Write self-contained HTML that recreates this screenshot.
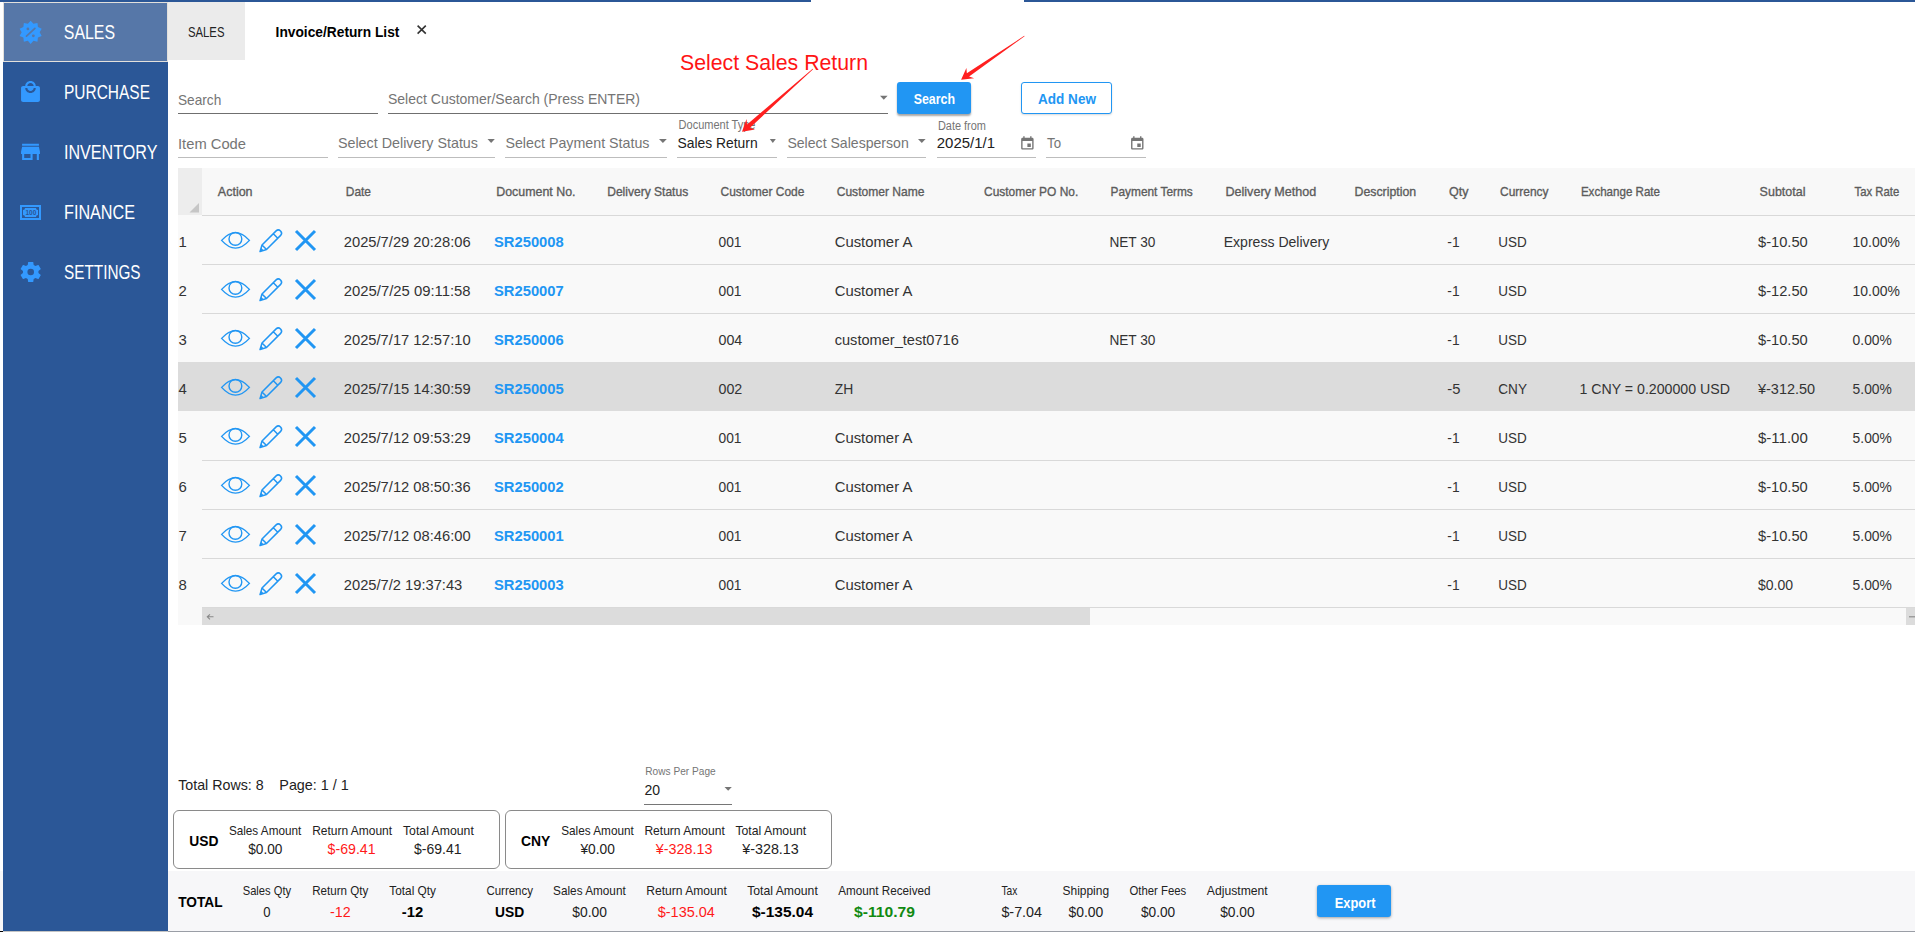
<!DOCTYPE html>
<html lang="en"><head><meta charset="utf-8"><title>Invoice/Return List</title>
<style>
html,body{margin:0;padding:0;width:1915px;height:932px;overflow:hidden;background:#fff;font-family:"Liberation Sans",sans-serif;}
.a{position:absolute;box-sizing:border-box;}
svg text{font-family:"Liberation Sans",sans-serif;}
</style></head><body>
<!-- top accent bar -->
<div class="a" style="left:0;top:0;width:811px;height:2px;background:#2b5797"></div>
<div class="a" style="left:1024px;top:0;width:891px;height:2px;background:#2b5797"></div>
<!-- sidebar -->
<div class="a" style="left:3px;top:2px;width:165px;height:930px;background:#2b5797"></div>
<div class="a" style="left:3px;top:2px;width:165px;height:60px;background:#5677a8;border:1px solid #e2e0dc"></div>
<!-- tabs -->
<div class="a" style="left:168px;top:2px;width:77px;height:58px;background:#ebebeb"></div>
<!-- filters: underlines -->
<div class="a" style="left:178px;top:113px;width:200px;height:1px;background:#6f6f6f"></div>
<div class="a" style="left:388px;top:113px;width:500px;height:1px;background:#6f6f6f"></div>
<div class="a" style="left:178px;top:157px;width:150px;height:1px;background:#bdbdbd"></div>
<div class="a" style="left:338px;top:157px;width:157px;height:1px;background:#bdbdbd"></div>
<div class="a" style="left:505px;top:157px;width:162px;height:1px;background:#bdbdbd"></div>
<div class="a" style="left:677px;top:157px;width:100px;height:1px;background:#bdbdbd"></div>
<div class="a" style="left:787px;top:157px;width:139px;height:1px;background:#bdbdbd"></div>
<div class="a" style="left:937px;top:157px;width:99px;height:1px;background:#bdbdbd"></div>
<div class="a" style="left:1046px;top:157px;width:100px;height:1px;background:#bdbdbd"></div>
<!-- buttons -->
<div class="a" style="left:897px;top:82px;width:74px;height:32px;background:#2196f3;border-radius:3px;box-shadow:0 2px 2px rgba(0,0,0,.35)"></div>
<div class="a" style="left:1021px;top:82px;width:91px;height:32px;background:#fff;border:1.3px solid #2196f3;border-radius:3px;box-shadow:0 1px 2px rgba(0,0,0,.15)"></div>
<!-- table -->
<div class="a" style="left:178px;top:168px;width:1737px;height:47px;background:#f8f8f8"></div>
<div class="a" style="left:178px;top:168px;width:24px;height:47px;background:#ededed"></div>
<div class="a" style="left:178px;top:215px;width:1737px;height:392px;background:#f9f9f9"></div>
<div class="a" style="left:202px;top:215px;width:1713px;height:1px;background:#d9d9d9"></div>
<div class="a" style="left:178px;top:362px;width:1737px;height:49px;background:#dcdcdc"></div>
<div class="a" style="left:202px;top:264px;width:1713px;height:1px;background:#d9d9d9"></div>
<div class="a" style="left:202px;top:313px;width:1713px;height:1px;background:#d9d9d9"></div>
<div class="a" style="left:202px;top:460px;width:1713px;height:1px;background:#d9d9d9"></div>
<div class="a" style="left:202px;top:509px;width:1713px;height:1px;background:#d9d9d9"></div>
<div class="a" style="left:202px;top:558px;width:1713px;height:1px;background:#d9d9d9"></div>
<!-- scrollbar -->
<div class="a" style="left:178px;top:607px;width:1737px;height:18px;background:#f9f9f9"></div>
<div class="a" style="left:202px;top:607px;width:1713px;height:1px;background:#d9d9d9"></div>
<div class="a" style="left:202px;top:608px;width:888px;height:17px;background:#dcdcdc"></div>
<div class="a" style="left:1906px;top:608px;width:9px;height:17px;background:#dcdcdc"></div>
<!-- footer -->
<div class="a" style="left:644px;top:804px;width:88px;height:1px;background:#767676"></div>
<div class="a" style="left:173px;top:810px;width:327px;height:59px;border:1px solid #8a8a8a;border-radius:6px"></div>
<div class="a" style="left:505px;top:810px;width:327px;height:59px;border:1px solid #8a8a8a;border-radius:6px"></div>
<div class="a" style="left:168px;top:871px;width:1747px;height:61px;background:#f7f7f9;border-bottom:1px solid #9a9ea6"></div>
<div class="a" style="left:0;top:931px;width:3px;height:1px;background:#000"></div>
<div class="a" style="left:3px;top:931px;width:165px;height:1px;background:#c4c4c4"></div>
<div class="a" style="left:0;top:871px;width:3px;height:60px;background:#f7f7f9"></div>
<div class="a" style="left:1317px;top:885px;width:73.5px;height:31.5px;background:#2196f3;border-radius:3px;box-shadow:0 1px 3px rgba(0,0,0,.35)"></div>

<svg class="a" style="left:0;top:0" width="1915" height="932" viewBox="0 0 1915 932">
<polygon points="30.65,20.70 33.43,23.74 37.47,22.92 37.93,27.01 41.68,28.72 39.65,32.30 41.68,35.88 37.93,37.59 37.47,41.68 33.43,40.86 30.65,43.90 27.87,40.86 23.83,41.68 23.37,37.59 19.62,35.88 21.65,32.30 19.62,28.72 23.37,27.01 23.83,22.92 27.87,23.74" fill="#3399ff"/>
<circle cx="27.9" cy="28.9" r="1.4" fill="#5677a8"/><circle cx="33.35" cy="35.8" r="1.4" fill="#5677a8"/>
<line x1="26.5" y1="36.1" x2="34.9" y2="28.3" stroke="#5677a8" stroke-width="1.7" stroke-linecap="round"/>
<g transform="translate(17.9,80) scale(1.05,1.0)"><path fill="#3399ff" d="M19 6h-2c0-2.76-2.24-5-5-5S7 3.24 7 6H5c-1.1 0-1.99.9-1.99 2L3 20c0 1.1.9 2 2 2h14c1.1 0 2-.9 2-2V8c0-1.1-.9-2-2-2zm-7-3c1.66 0 3 1.34 3 3H9c0-1.66 1.34-3 3-3zm0 10c-2.76 0-5-2.24-5-5h2c0 1.66 1.34 3 3 3s3-1.34 3-3h2c0 2.76-2.24 5-5 5z"/></g>
<g transform="translate(17.9,139.6) scale(1.05,1.02)"><path fill="#3399ff" d="M20 4H4v2h16V4zm1 10v-2l-1-5H4l-1 5v2h1v6h10v-6h4v6h2v-6h1zm-9 4H6v-4h6v4z"/></g>
<rect x="21" y="206" width="19" height="13" fill="none" stroke="#3399ff" stroke-width="2"/>
<path fill="#3399ff" d="M25,208 H36 A2,2 0 0 0 38,210 V215 A2,2 0 0 0 36,217 H25 A2,2 0 0 0 23,215 V210 A2,2 0 0 0 25,208 Z"/>
<text x="25.5" y="215.2" font-size="7.3" font-weight="bold" fill="#2b5797" textLength="10.8" lengthAdjust="spacingAndGlyphs">100</text>
<g transform="translate(17.74,259.4) scale(1.08,1.05)"><path fill="#3399ff" fill-rule="evenodd" d="M19.14 12.94c.04-.3.06-.61.06-.94 0-.32-.02-.64-.07-.94l2.03-1.58c.18-.14.23-.41.12-.61l-1.92-3.32c-.12-.22-.37-.29-.59-.22l-2.39.96c-.5-.38-1.030-.7-1.62-.94l-.36-2.54c-.04-.24-.24-.41-.48-.41h-3.84c-.24 0-.43.17-.47.41l-.36 2.54c-.59.24-1.13.57-1.62.94l-2.39-.96c-.22-.08-.47 0-.59.22L2.74 8.87c-.12.21-.08.47.12.61l2.03 1.58c-.05.3-.09.63-.09.94s.02.64.07.94l-2.03 1.58c-.18.14-.23.41-.12.61l1.92 3.32c.12.22.37.29.59.22l2.39-.96c.5.38 1.03.7 1.62.94l.36 2.54c.05.24.24.41.48.41h3.84c.24 0 .44-.17.47-.41l.36-2.54c.59-.24 1.13-.56 1.62-.94l2.39.96c.22.08.47 0 .59-.22l1.92-3.32c.12-.22.07-.47-.12-.61l-2.01-1.58z"/></g><circle cx="30.7" cy="272" r="3.3" fill="#2b5797"/>
<path d="M417.6,25.6 L425.8,33.6 M425.8,25.6 L417.6,33.6" stroke="#333" stroke-width="1.6"/>
<polygon points="880,95.7 887.6,95.7 883.80,99.7" fill="#757575"/>
<polygon points="487.5,139 494.8,139 491.15,143" fill="#757575"/>
<polygon points="659,139 666.8,139 662.90,143" fill="#757575"/>
<polygon points="769.8,139 775.8,139 772.80,143" fill="#757575"/>
<polygon points="918,139 925.6,139 921.80,143" fill="#757575"/>
<polygon points="724.5,787 731.8,787 728.15,790.7" fill="#757575"/>
<g transform="translate(1019.1,135.7) scale(0.69,0.66)"><path fill="#757575" d="M17 12h-5v5h5v-5zM16 1v2H8V1H6v2H5c-1.11 0-1.99.9-1.99 2L3 19c0 1.1.89 2 2 2h14c1.1 0 2-.9 2-2V5c0-1.1-.9-2-2-2h-1V1h-2zm3 18H5V8h14v11z"/></g>
<g transform="translate(1129.0,135.7) scale(0.69,0.66)"><path fill="#757575" d="M17 12h-5v5h5v-5zM16 1v2H8V1H6v2H5c-1.11 0-1.99.9-1.99 2L3 19c0 1.1.89 2 2 2h14c1.1 0 2-.9 2-2V5c0-1.1-.9-2-2-2h-1V1h-2zm3 18H5V8h14v11z"/></g>
<polygon points="189.5,212.5 199,203 199,212.5" fill="#c6c6c6"/>
<path d="M213.5,616.8 H207.5 M210,614.3 L207.3,616.8 L210,619.3" stroke="#888" stroke-width="1.1" fill="none"/>
<path d="M1909,616.8 H1915" stroke="#888" stroke-width="1.1" fill="none"/>
<g transform="translate(0,0)"><path d="M221.6,240.4 Q235.5,224.9 249.4,240.4 Q235.5,255.9 221.6,240.4 Z" fill="none" stroke="#2196f3" stroke-width="1.4" stroke-linejoin="miter"/><circle cx="235.4" cy="238.9" r="6.4" fill="none" stroke="#2196f3" stroke-width="1.4"/><path d="M260,251.6 L262,245 L276.12,230.86 A3.2,3.2 0 0 1 280.64,235.38 L266.5,249.5 Z M262,245 L266.5,249.5 M273.3,233.68 L277.82,238.2" fill="none" stroke="#2196f3" stroke-width="1.5" stroke-linejoin="round"/><path d="M260,251.6 L261.2,247.8 L263.8,250.4 Z" fill="#2196f3"/><path d="M296,231 L315,250 M315,231 L296,250" stroke="#2196f3" stroke-width="3"/></g>
<g transform="translate(0,49)"><path d="M221.6,240.4 Q235.5,224.9 249.4,240.4 Q235.5,255.9 221.6,240.4 Z" fill="none" stroke="#2196f3" stroke-width="1.4" stroke-linejoin="miter"/><circle cx="235.4" cy="238.9" r="6.4" fill="none" stroke="#2196f3" stroke-width="1.4"/><path d="M260,251.6 L262,245 L276.12,230.86 A3.2,3.2 0 0 1 280.64,235.38 L266.5,249.5 Z M262,245 L266.5,249.5 M273.3,233.68 L277.82,238.2" fill="none" stroke="#2196f3" stroke-width="1.5" stroke-linejoin="round"/><path d="M260,251.6 L261.2,247.8 L263.8,250.4 Z" fill="#2196f3"/><path d="M296,231 L315,250 M315,231 L296,250" stroke="#2196f3" stroke-width="3"/></g>
<g transform="translate(0,98)"><path d="M221.6,240.4 Q235.5,224.9 249.4,240.4 Q235.5,255.9 221.6,240.4 Z" fill="none" stroke="#2196f3" stroke-width="1.4" stroke-linejoin="miter"/><circle cx="235.4" cy="238.9" r="6.4" fill="none" stroke="#2196f3" stroke-width="1.4"/><path d="M260,251.6 L262,245 L276.12,230.86 A3.2,3.2 0 0 1 280.64,235.38 L266.5,249.5 Z M262,245 L266.5,249.5 M273.3,233.68 L277.82,238.2" fill="none" stroke="#2196f3" stroke-width="1.5" stroke-linejoin="round"/><path d="M260,251.6 L261.2,247.8 L263.8,250.4 Z" fill="#2196f3"/><path d="M296,231 L315,250 M315,231 L296,250" stroke="#2196f3" stroke-width="3"/></g>
<g transform="translate(0,147)"><path d="M221.6,240.4 Q235.5,224.9 249.4,240.4 Q235.5,255.9 221.6,240.4 Z" fill="none" stroke="#2196f3" stroke-width="1.4" stroke-linejoin="miter"/><circle cx="235.4" cy="238.9" r="6.4" fill="none" stroke="#2196f3" stroke-width="1.4"/><path d="M260,251.6 L262,245 L276.12,230.86 A3.2,3.2 0 0 1 280.64,235.38 L266.5,249.5 Z M262,245 L266.5,249.5 M273.3,233.68 L277.82,238.2" fill="none" stroke="#2196f3" stroke-width="1.5" stroke-linejoin="round"/><path d="M260,251.6 L261.2,247.8 L263.8,250.4 Z" fill="#2196f3"/><path d="M296,231 L315,250 M315,231 L296,250" stroke="#2196f3" stroke-width="3"/></g>
<g transform="translate(0,196)"><path d="M221.6,240.4 Q235.5,224.9 249.4,240.4 Q235.5,255.9 221.6,240.4 Z" fill="none" stroke="#2196f3" stroke-width="1.4" stroke-linejoin="miter"/><circle cx="235.4" cy="238.9" r="6.4" fill="none" stroke="#2196f3" stroke-width="1.4"/><path d="M260,251.6 L262,245 L276.12,230.86 A3.2,3.2 0 0 1 280.64,235.38 L266.5,249.5 Z M262,245 L266.5,249.5 M273.3,233.68 L277.82,238.2" fill="none" stroke="#2196f3" stroke-width="1.5" stroke-linejoin="round"/><path d="M260,251.6 L261.2,247.8 L263.8,250.4 Z" fill="#2196f3"/><path d="M296,231 L315,250 M315,231 L296,250" stroke="#2196f3" stroke-width="3"/></g>
<g transform="translate(0,245)"><path d="M221.6,240.4 Q235.5,224.9 249.4,240.4 Q235.5,255.9 221.6,240.4 Z" fill="none" stroke="#2196f3" stroke-width="1.4" stroke-linejoin="miter"/><circle cx="235.4" cy="238.9" r="6.4" fill="none" stroke="#2196f3" stroke-width="1.4"/><path d="M260,251.6 L262,245 L276.12,230.86 A3.2,3.2 0 0 1 280.64,235.38 L266.5,249.5 Z M262,245 L266.5,249.5 M273.3,233.68 L277.82,238.2" fill="none" stroke="#2196f3" stroke-width="1.5" stroke-linejoin="round"/><path d="M260,251.6 L261.2,247.8 L263.8,250.4 Z" fill="#2196f3"/><path d="M296,231 L315,250 M315,231 L296,250" stroke="#2196f3" stroke-width="3"/></g>
<g transform="translate(0,294)"><path d="M221.6,240.4 Q235.5,224.9 249.4,240.4 Q235.5,255.9 221.6,240.4 Z" fill="none" stroke="#2196f3" stroke-width="1.4" stroke-linejoin="miter"/><circle cx="235.4" cy="238.9" r="6.4" fill="none" stroke="#2196f3" stroke-width="1.4"/><path d="M260,251.6 L262,245 L276.12,230.86 A3.2,3.2 0 0 1 280.64,235.38 L266.5,249.5 Z M262,245 L266.5,249.5 M273.3,233.68 L277.82,238.2" fill="none" stroke="#2196f3" stroke-width="1.5" stroke-linejoin="round"/><path d="M260,251.6 L261.2,247.8 L263.8,250.4 Z" fill="#2196f3"/><path d="M296,231 L315,250 M315,231 L296,250" stroke="#2196f3" stroke-width="3"/></g>
<g transform="translate(0,343)"><path d="M221.6,240.4 Q235.5,224.9 249.4,240.4 Q235.5,255.9 221.6,240.4 Z" fill="none" stroke="#2196f3" stroke-width="1.4" stroke-linejoin="miter"/><circle cx="235.4" cy="238.9" r="6.4" fill="none" stroke="#2196f3" stroke-width="1.4"/><path d="M260,251.6 L262,245 L276.12,230.86 A3.2,3.2 0 0 1 280.64,235.38 L266.5,249.5 Z M262,245 L266.5,249.5 M273.3,233.68 L277.82,238.2" fill="none" stroke="#2196f3" stroke-width="1.5" stroke-linejoin="round"/><path d="M260,251.6 L261.2,247.8 L263.8,250.4 Z" fill="#2196f3"/><path d="M296,231 L315,250 M315,231 L296,250" stroke="#2196f3" stroke-width="3"/></g>
<text x="63.80" y="39.00" font-size="19.48" fill="#fff" textLength="51.20" lengthAdjust="spacingAndGlyphs">SALES</text>
<text x="64.00" y="99.00" font-size="19.48" fill="#fff" textLength="86.00" lengthAdjust="spacingAndGlyphs">PURCHASE</text>
<text x="64.00" y="159.10" font-size="19.48" fill="#fff" textLength="93.40" lengthAdjust="spacingAndGlyphs">INVENTORY</text>
<text x="64.00" y="219.00" font-size="19.48" fill="#fff" textLength="71.00" lengthAdjust="spacingAndGlyphs">FINANCE</text>
<text x="64.00" y="279.10" font-size="19.48" fill="#fff" textLength="76.59" lengthAdjust="spacingAndGlyphs">SETTINGS</text>
<text x="187.90" y="37.10" font-size="14.83" fill="#222" textLength="36.60" lengthAdjust="spacingAndGlyphs">SALES</text>
<text x="275.60" y="37.10" font-size="14.83" fill="#000" font-weight="bold" textLength="123.79" lengthAdjust="spacingAndGlyphs">Invoice/Return List</text>
<text x="680.00" y="69.60" font-size="22.09" fill="#ff1414" textLength="188.00" lengthAdjust="spacingAndGlyphs">Select Sales Return</text>
<text x="178.00" y="104.80" font-size="15.55" fill="#757575" textLength="43.31" lengthAdjust="spacingAndGlyphs">Search</text>
<text x="388.00" y="103.70" font-size="15.55" fill="#757575" textLength="252.00" lengthAdjust="spacingAndGlyphs">Select Customer/Search (Press ENTER)</text>
<text x="913.70" y="104.10" font-size="14.39" fill="#fff" font-weight="bold" textLength="41.31" lengthAdjust="spacingAndGlyphs">Search</text>
<text x="1038.00" y="104.10" font-size="14.39" fill="#2196f3" font-weight="bold" textLength="57.97" lengthAdjust="spacingAndGlyphs">Add New</text>
<text x="178.00" y="148.50" font-size="15.55" fill="#757575" textLength="68.00" lengthAdjust="spacingAndGlyphs">Item Code</text>
<text x="337.90" y="148.00" font-size="15.55" fill="#757575" textLength="140.10" lengthAdjust="spacingAndGlyphs">Select Delivery Status</text>
<text x="505.40" y="148.00" font-size="15.55" fill="#757575" textLength="144.10" lengthAdjust="spacingAndGlyphs">Select Payment Status</text>
<text x="678.60" y="128.80" font-size="12.21" fill="#757575" textLength="76.90" lengthAdjust="spacingAndGlyphs">Document Type</text>
<text x="677.50" y="148.00" font-size="15.55" fill="#212121" textLength="80.10" lengthAdjust="spacingAndGlyphs">Sales Return</text>
<text x="787.40" y="148.00" font-size="15.55" fill="#757575" textLength="121.40" lengthAdjust="spacingAndGlyphs">Select Salesperson</text>
<text x="937.90" y="129.60" font-size="12.21" fill="#757575" textLength="48.10" lengthAdjust="spacingAndGlyphs">Date from</text>
<text x="936.80" y="148.00" font-size="15.55" fill="#212121" textLength="58.19" lengthAdjust="spacingAndGlyphs">2025/1/1</text>
<text x="1047.00" y="148.00" font-size="15.55" fill="#757575" textLength="14.00" lengthAdjust="spacingAndGlyphs">To</text>
<text x="217.80" y="196.00" font-size="12.94" fill="#5c5c5c" stroke="#5c5c5c" stroke-width="0.35" textLength="34.80" lengthAdjust="spacingAndGlyphs">Action</text>
<text x="345.80" y="196.00" font-size="12.94" fill="#5c5c5c" stroke="#5c5c5c" stroke-width="0.35" textLength="25.20" lengthAdjust="spacingAndGlyphs">Date</text>
<text x="496.20" y="196.00" font-size="12.94" fill="#5c5c5c" stroke="#5c5c5c" stroke-width="0.35" textLength="79.30" lengthAdjust="spacingAndGlyphs">Document No.</text>
<text x="607.20" y="196.00" font-size="12.94" fill="#5c5c5c" stroke="#5c5c5c" stroke-width="0.35" textLength="81.00" lengthAdjust="spacingAndGlyphs">Delivery Status</text>
<text x="720.50" y="196.00" font-size="12.94" fill="#5c5c5c" stroke="#5c5c5c" stroke-width="0.35" textLength="83.90" lengthAdjust="spacingAndGlyphs">Customer Code</text>
<text x="836.70" y="196.00" font-size="12.94" fill="#5c5c5c" stroke="#5c5c5c" stroke-width="0.35" textLength="87.80" lengthAdjust="spacingAndGlyphs">Customer Name</text>
<text x="984.00" y="196.00" font-size="12.94" fill="#5c5c5c" stroke="#5c5c5c" stroke-width="0.35" textLength="94.30" lengthAdjust="spacingAndGlyphs">Customer PO No.</text>
<text x="1110.60" y="196.00" font-size="12.94" fill="#5c5c5c" stroke="#5c5c5c" stroke-width="0.35" textLength="82.20" lengthAdjust="spacingAndGlyphs">Payment Terms</text>
<text x="1225.50" y="196.00" font-size="12.94" fill="#5c5c5c" stroke="#5c5c5c" stroke-width="0.35" textLength="90.70" lengthAdjust="spacingAndGlyphs">Delivery Method</text>
<text x="1354.50" y="196.00" font-size="12.94" fill="#5c5c5c" stroke="#5c5c5c" stroke-width="0.35" textLength="61.70" lengthAdjust="spacingAndGlyphs">Description</text>
<text x="1449.00" y="196.00" font-size="12.94" fill="#5c5c5c" stroke="#5c5c5c" stroke-width="0.35" textLength="19.50" lengthAdjust="spacingAndGlyphs">Qty</text>
<text x="1500.00" y="196.00" font-size="12.94" fill="#5c5c5c" stroke="#5c5c5c" stroke-width="0.35" textLength="48.50" lengthAdjust="spacingAndGlyphs">Currency</text>
<text x="1580.90" y="196.00" font-size="12.94" fill="#5c5c5c" stroke="#5c5c5c" stroke-width="0.35" textLength="79.10" lengthAdjust="spacingAndGlyphs">Exchange Rate</text>
<text x="1759.60" y="196.00" font-size="12.94" fill="#5c5c5c" stroke="#5c5c5c" stroke-width="0.35" textLength="45.91" lengthAdjust="spacingAndGlyphs">Subtotal</text>
<text x="1854.60" y="196.00" font-size="12.94" fill="#5c5c5c" stroke="#5c5c5c" stroke-width="0.35" textLength="44.70" lengthAdjust="spacingAndGlyphs">Tax Rate</text>
<text x="178.50" y="247.00" font-size="15.41" fill="#333" textLength="8.31" lengthAdjust="spacingAndGlyphs">1</text>
<text x="343.80" y="247.00" font-size="15.41" fill="#333" textLength="126.80" lengthAdjust="spacingAndGlyphs">2025/7/29 20:28:06</text>
<text x="494.00" y="247.00" font-size="15.41" fill="#2196f3" font-weight="bold" textLength="69.70" lengthAdjust="spacingAndGlyphs">SR250008</text>
<text x="718.50" y="247.00" font-size="15.41" fill="#333" textLength="23.01" lengthAdjust="spacingAndGlyphs">001</text>
<text x="834.70" y="247.00" font-size="15.41" fill="#333" textLength="77.60" lengthAdjust="spacingAndGlyphs">Customer A</text>
<text x="1109.40" y="247.00" font-size="15.41" fill="#333" textLength="46.00" lengthAdjust="spacingAndGlyphs">NET 30</text>
<text x="1223.70" y="247.00" font-size="15.41" fill="#333" textLength="105.50" lengthAdjust="spacingAndGlyphs">Express Delivery</text>
<text x="1447.30" y="247.00" font-size="15.41" fill="#333" textLength="12.30" lengthAdjust="spacingAndGlyphs">-1</text>
<text x="1498.30" y="247.00" font-size="15.41" fill="#333" textLength="28.50" lengthAdjust="spacingAndGlyphs">USD</text>
<text x="1758.00" y="247.00" font-size="15.41" fill="#333" textLength="49.79" lengthAdjust="spacingAndGlyphs">$-10.50</text>
<text x="1852.60" y="247.00" font-size="15.41" fill="#333" textLength="47.29" lengthAdjust="spacingAndGlyphs">10.00%</text>
<text x="178.50" y="296.00" font-size="15.41" fill="#333" textLength="8.31" lengthAdjust="spacingAndGlyphs">2</text>
<text x="343.80" y="296.00" font-size="15.41" fill="#333" textLength="126.80" lengthAdjust="spacingAndGlyphs">2025/7/25 09:11:58</text>
<text x="494.00" y="296.00" font-size="15.41" fill="#2196f3" font-weight="bold" textLength="69.70" lengthAdjust="spacingAndGlyphs">SR250007</text>
<text x="718.50" y="296.00" font-size="15.41" fill="#333" textLength="23.01" lengthAdjust="spacingAndGlyphs">001</text>
<text x="834.70" y="296.00" font-size="15.41" fill="#333" textLength="77.60" lengthAdjust="spacingAndGlyphs">Customer A</text>
<text x="1447.30" y="296.00" font-size="15.41" fill="#333" textLength="12.30" lengthAdjust="spacingAndGlyphs">-1</text>
<text x="1498.30" y="296.00" font-size="15.41" fill="#333" textLength="28.50" lengthAdjust="spacingAndGlyphs">USD</text>
<text x="1758.00" y="296.00" font-size="15.41" fill="#333" textLength="49.79" lengthAdjust="spacingAndGlyphs">$-12.50</text>
<text x="1852.60" y="296.00" font-size="15.41" fill="#333" textLength="47.29" lengthAdjust="spacingAndGlyphs">10.00%</text>
<text x="178.50" y="345.00" font-size="15.41" fill="#333" textLength="8.31" lengthAdjust="spacingAndGlyphs">3</text>
<text x="343.80" y="345.00" font-size="15.41" fill="#333" textLength="126.80" lengthAdjust="spacingAndGlyphs">2025/7/17 12:57:10</text>
<text x="494.00" y="345.00" font-size="15.41" fill="#2196f3" font-weight="bold" textLength="69.70" lengthAdjust="spacingAndGlyphs">SR250006</text>
<text x="718.50" y="345.00" font-size="15.41" fill="#333" textLength="23.81" lengthAdjust="spacingAndGlyphs">004</text>
<text x="834.70" y="345.00" font-size="15.41" fill="#333" textLength="124.10" lengthAdjust="spacingAndGlyphs">customer_test0716</text>
<text x="1109.40" y="345.00" font-size="15.41" fill="#333" textLength="46.00" lengthAdjust="spacingAndGlyphs">NET 30</text>
<text x="1447.30" y="345.00" font-size="15.41" fill="#333" textLength="12.30" lengthAdjust="spacingAndGlyphs">-1</text>
<text x="1498.30" y="345.00" font-size="15.41" fill="#333" textLength="28.50" lengthAdjust="spacingAndGlyphs">USD</text>
<text x="1758.00" y="345.00" font-size="15.41" fill="#333" textLength="49.79" lengthAdjust="spacingAndGlyphs">$-10.50</text>
<text x="1852.60" y="345.00" font-size="15.41" fill="#333" textLength="39.21" lengthAdjust="spacingAndGlyphs">0.00%</text>
<text x="178.50" y="394.00" font-size="15.41" fill="#333" textLength="8.31" lengthAdjust="spacingAndGlyphs">4</text>
<text x="343.80" y="394.00" font-size="15.41" fill="#333" textLength="126.80" lengthAdjust="spacingAndGlyphs">2025/7/15 14:30:59</text>
<text x="494.00" y="394.00" font-size="15.41" fill="#2196f3" font-weight="bold" textLength="69.70" lengthAdjust="spacingAndGlyphs">SR250005</text>
<text x="718.50" y="394.00" font-size="15.41" fill="#333" textLength="23.81" lengthAdjust="spacingAndGlyphs">002</text>
<text x="834.70" y="394.00" font-size="15.41" fill="#333" textLength="18.50" lengthAdjust="spacingAndGlyphs">ZH</text>
<text x="1447.30" y="394.00" font-size="15.41" fill="#333" textLength="13.10" lengthAdjust="spacingAndGlyphs">-5</text>
<text x="1498.30" y="394.00" font-size="15.41" fill="#333" textLength="28.70" lengthAdjust="spacingAndGlyphs">CNY</text>
<text x="1579.40" y="394.00" font-size="15.41" fill="#333" textLength="150.60" lengthAdjust="spacingAndGlyphs">1 CNY = 0.200000 USD</text>
<text x="1758.01" y="394.00" font-size="15.41" fill="#333" textLength="57.08" lengthAdjust="spacingAndGlyphs">¥-312.50</text>
<text x="1852.60" y="394.00" font-size="15.41" fill="#333" textLength="39.21" lengthAdjust="spacingAndGlyphs">5.00%</text>
<text x="178.50" y="443.00" font-size="15.41" fill="#333" textLength="8.31" lengthAdjust="spacingAndGlyphs">5</text>
<text x="343.80" y="443.00" font-size="15.41" fill="#333" textLength="126.80" lengthAdjust="spacingAndGlyphs">2025/7/12 09:53:29</text>
<text x="494.00" y="443.00" font-size="15.41" fill="#2196f3" font-weight="bold" textLength="69.70" lengthAdjust="spacingAndGlyphs">SR250004</text>
<text x="718.50" y="443.00" font-size="15.41" fill="#333" textLength="23.01" lengthAdjust="spacingAndGlyphs">001</text>
<text x="834.70" y="443.00" font-size="15.41" fill="#333" textLength="77.60" lengthAdjust="spacingAndGlyphs">Customer A</text>
<text x="1447.30" y="443.00" font-size="15.41" fill="#333" textLength="12.30" lengthAdjust="spacingAndGlyphs">-1</text>
<text x="1498.30" y="443.00" font-size="15.41" fill="#333" textLength="28.50" lengthAdjust="spacingAndGlyphs">USD</text>
<text x="1758.00" y="443.00" font-size="15.41" fill="#333" textLength="49.81" lengthAdjust="spacingAndGlyphs">$-11.00</text>
<text x="1852.60" y="443.00" font-size="15.41" fill="#333" textLength="39.21" lengthAdjust="spacingAndGlyphs">5.00%</text>
<text x="178.50" y="492.00" font-size="15.41" fill="#333" textLength="8.31" lengthAdjust="spacingAndGlyphs">6</text>
<text x="343.80" y="492.00" font-size="15.41" fill="#333" textLength="126.80" lengthAdjust="spacingAndGlyphs">2025/7/12 08:50:36</text>
<text x="494.00" y="492.00" font-size="15.41" fill="#2196f3" font-weight="bold" textLength="69.70" lengthAdjust="spacingAndGlyphs">SR250002</text>
<text x="718.50" y="492.00" font-size="15.41" fill="#333" textLength="23.01" lengthAdjust="spacingAndGlyphs">001</text>
<text x="834.70" y="492.00" font-size="15.41" fill="#333" textLength="77.60" lengthAdjust="spacingAndGlyphs">Customer A</text>
<text x="1447.30" y="492.00" font-size="15.41" fill="#333" textLength="12.30" lengthAdjust="spacingAndGlyphs">-1</text>
<text x="1498.30" y="492.00" font-size="15.41" fill="#333" textLength="28.50" lengthAdjust="spacingAndGlyphs">USD</text>
<text x="1758.00" y="492.00" font-size="15.41" fill="#333" textLength="49.79" lengthAdjust="spacingAndGlyphs">$-10.50</text>
<text x="1852.60" y="492.00" font-size="15.41" fill="#333" textLength="39.21" lengthAdjust="spacingAndGlyphs">5.00%</text>
<text x="178.50" y="541.00" font-size="15.41" fill="#333" textLength="8.31" lengthAdjust="spacingAndGlyphs">7</text>
<text x="343.80" y="541.00" font-size="15.41" fill="#333" textLength="126.80" lengthAdjust="spacingAndGlyphs">2025/7/12 08:46:00</text>
<text x="494.00" y="541.00" font-size="15.41" fill="#2196f3" font-weight="bold" textLength="69.70" lengthAdjust="spacingAndGlyphs">SR250001</text>
<text x="718.50" y="541.00" font-size="15.41" fill="#333" textLength="23.01" lengthAdjust="spacingAndGlyphs">001</text>
<text x="834.70" y="541.00" font-size="15.41" fill="#333" textLength="77.60" lengthAdjust="spacingAndGlyphs">Customer A</text>
<text x="1447.30" y="541.00" font-size="15.41" fill="#333" textLength="12.30" lengthAdjust="spacingAndGlyphs">-1</text>
<text x="1498.30" y="541.00" font-size="15.41" fill="#333" textLength="28.50" lengthAdjust="spacingAndGlyphs">USD</text>
<text x="1758.00" y="541.00" font-size="15.41" fill="#333" textLength="49.79" lengthAdjust="spacingAndGlyphs">$-10.50</text>
<text x="1852.60" y="541.00" font-size="15.41" fill="#333" textLength="39.21" lengthAdjust="spacingAndGlyphs">5.00%</text>
<text x="178.50" y="590.00" font-size="15.41" fill="#333" textLength="8.31" lengthAdjust="spacingAndGlyphs">8</text>
<text x="343.80" y="590.00" font-size="15.41" fill="#333" textLength="118.50" lengthAdjust="spacingAndGlyphs">2025/7/2 19:37:43</text>
<text x="494.00" y="590.00" font-size="15.41" fill="#2196f3" font-weight="bold" textLength="69.70" lengthAdjust="spacingAndGlyphs">SR250003</text>
<text x="718.50" y="590.00" font-size="15.41" fill="#333" textLength="23.01" lengthAdjust="spacingAndGlyphs">001</text>
<text x="834.70" y="590.00" font-size="15.41" fill="#333" textLength="77.60" lengthAdjust="spacingAndGlyphs">Customer A</text>
<text x="1447.30" y="590.00" font-size="15.41" fill="#333" textLength="12.30" lengthAdjust="spacingAndGlyphs">-1</text>
<text x="1498.30" y="590.00" font-size="15.41" fill="#333" textLength="28.50" lengthAdjust="spacingAndGlyphs">USD</text>
<text x="1758.00" y="590.00" font-size="15.41" fill="#333" textLength="35.11" lengthAdjust="spacingAndGlyphs">$0.00</text>
<text x="1852.60" y="590.00" font-size="15.41" fill="#333" textLength="39.21" lengthAdjust="spacingAndGlyphs">5.00%</text>
<text x="178.20" y="789.80" font-size="15.41" fill="#222" textLength="85.41" lengthAdjust="spacingAndGlyphs">Total Rows: 8</text>
<text x="279.30" y="789.80" font-size="15.41" fill="#222" textLength="69.50" lengthAdjust="spacingAndGlyphs">Page: 1 / 1</text>
<text x="645.30" y="775.00" font-size="11.19" fill="#757575" textLength="70.40" lengthAdjust="spacingAndGlyphs">Rows Per Page</text>
<text x="644.40" y="794.70" font-size="15.12" fill="#212121" textLength="15.60" lengthAdjust="spacingAndGlyphs">20</text>
<text x="189.20" y="845.50" font-size="15.26" fill="#000" font-weight="bold" textLength="29.20" lengthAdjust="spacingAndGlyphs">USD</text>
<text x="228.90" y="835.00" font-size="12.79" fill="#222" textLength="72.31" lengthAdjust="spacingAndGlyphs">Sales Amount</text>
<text x="248.20" y="853.60" font-size="15.12" fill="#222" textLength="34.21" lengthAdjust="spacingAndGlyphs">$0.00</text>
<text x="312.20" y="835.00" font-size="12.79" fill="#222" textLength="79.91" lengthAdjust="spacingAndGlyphs">Return Amount</text>
<text x="327.60" y="853.60" font-size="15.12" fill="#ff1a1a" textLength="47.99" lengthAdjust="spacingAndGlyphs">$-69.41</text>
<text x="403.00" y="835.00" font-size="12.79" fill="#222" textLength="70.80" lengthAdjust="spacingAndGlyphs">Total Amount</text>
<text x="414.00" y="853.60" font-size="15.12" fill="#222" textLength="47.49" lengthAdjust="spacingAndGlyphs">$-69.41</text>
<text x="521.00" y="845.50" font-size="15.26" fill="#000" font-weight="bold" textLength="29.30" lengthAdjust="spacingAndGlyphs">CNY</text>
<text x="561.20" y="835.00" font-size="12.79" fill="#222" textLength="72.61" lengthAdjust="spacingAndGlyphs">Sales Amount</text>
<text x="580.41" y="853.60" font-size="15.12" fill="#222" textLength="34.39" lengthAdjust="spacingAndGlyphs">¥0.00</text>
<text x="644.40" y="835.00" font-size="12.79" fill="#222" textLength="80.41" lengthAdjust="spacingAndGlyphs">Return Amount</text>
<text x="655.71" y="853.60" font-size="15.12" fill="#ff1a1a" textLength="56.68" lengthAdjust="spacingAndGlyphs">¥-328.13</text>
<text x="735.40" y="835.00" font-size="12.79" fill="#222" textLength="70.80" lengthAdjust="spacingAndGlyphs">Total Amount</text>
<text x="742.21" y="853.60" font-size="15.12" fill="#222" textLength="56.58" lengthAdjust="spacingAndGlyphs">¥-328.13</text>
<text x="178.20" y="906.60" font-size="15.26" fill="#000" font-weight="bold" textLength="44.30" lengthAdjust="spacingAndGlyphs">TOTAL</text>
<text x="242.70" y="895.00" font-size="12.79" fill="#222" textLength="48.50" lengthAdjust="spacingAndGlyphs">Sales Qty</text>
<text x="263.20" y="916.60" font-size="15.12" fill="#222" textLength="7.30" lengthAdjust="spacingAndGlyphs">0</text>
<text x="312.20" y="895.00" font-size="12.79" fill="#222" textLength="56.10" lengthAdjust="spacingAndGlyphs">Return Qty</text>
<text x="330.00" y="916.60" font-size="15.12" fill="#ff1a1a" textLength="20.60" lengthAdjust="spacingAndGlyphs">-12</text>
<text x="389.30" y="895.00" font-size="12.79" fill="#222" textLength="46.70" lengthAdjust="spacingAndGlyphs">Total Qty</text>
<text x="401.80" y="916.60" font-size="15.12" fill="#000" font-weight="bold" textLength="21.40" lengthAdjust="spacingAndGlyphs">-12</text>
<text x="486.40" y="895.00" font-size="12.79" fill="#222" textLength="46.60" lengthAdjust="spacingAndGlyphs">Currency</text>
<text x="495.00" y="916.60" font-size="15.12" fill="#000" font-weight="bold" textLength="29.20" lengthAdjust="spacingAndGlyphs">USD</text>
<text x="553.10" y="895.00" font-size="12.79" fill="#222" textLength="72.61" lengthAdjust="spacingAndGlyphs">Sales Amount</text>
<text x="572.30" y="916.60" font-size="15.12" fill="#222" textLength="34.71" lengthAdjust="spacingAndGlyphs">$0.00</text>
<text x="646.30" y="895.00" font-size="12.79" fill="#222" textLength="80.51" lengthAdjust="spacingAndGlyphs">Return Amount</text>
<text x="657.70" y="916.60" font-size="15.12" fill="#ff1a1a" textLength="57.20" lengthAdjust="spacingAndGlyphs">$-135.04</text>
<text x="747.20" y="895.00" font-size="12.79" fill="#222" textLength="70.60" lengthAdjust="spacingAndGlyphs">Total Amount</text>
<text x="752.00" y="916.60" font-size="15.12" fill="#000" font-weight="bold" textLength="61.00" lengthAdjust="spacingAndGlyphs">$-135.04</text>
<text x="838.20" y="895.00" font-size="12.79" fill="#222" textLength="92.30" lengthAdjust="spacingAndGlyphs">Amount Received</text>
<text x="854.10" y="916.60" font-size="15.12" fill="#118a11" font-weight="bold" textLength="60.89" lengthAdjust="spacingAndGlyphs">$-110.79</text>
<text x="1001.40" y="895.00" font-size="12.79" fill="#222" textLength="15.90" lengthAdjust="spacingAndGlyphs">Tax</text>
<text x="1001.40" y="916.60" font-size="15.12" fill="#222" textLength="40.61" lengthAdjust="spacingAndGlyphs">$-7.04</text>
<text x="1062.50" y="895.00" font-size="12.79" fill="#222" textLength="46.60" lengthAdjust="spacingAndGlyphs">Shipping</text>
<text x="1068.50" y="916.60" font-size="15.12" fill="#222" textLength="34.81" lengthAdjust="spacingAndGlyphs">$0.00</text>
<text x="1129.50" y="895.00" font-size="12.79" fill="#222" textLength="56.70" lengthAdjust="spacingAndGlyphs">Other Fees</text>
<text x="1141.00" y="916.60" font-size="15.12" fill="#222" textLength="34.21" lengthAdjust="spacingAndGlyphs">$0.00</text>
<text x="1206.80" y="895.00" font-size="12.79" fill="#222" textLength="60.91" lengthAdjust="spacingAndGlyphs">Adjustment</text>
<text x="1220.20" y="916.60" font-size="15.12" fill="#222" textLength="34.51" lengthAdjust="spacingAndGlyphs">$0.00</text>
<text x="1334.80" y="907.50" font-size="14.83" fill="#fff" font-weight="bold" textLength="40.70" lengthAdjust="spacingAndGlyphs">Export</text>
<polygon points="1024.23,35.85 966.85,73.31 966.40,68.00 961.10,79.70 974.10,78.30 969.12,76.60 1024.57,36.35" fill="#ff1f1f"/>
<polygon points="812.70,68.78 747.06,124.38 746.50,118.90 742.00,131.80 755.00,129.40 749.98,127.67 813.10,69.22" fill="#ff1f1f"/>
</svg>
</body></html>
